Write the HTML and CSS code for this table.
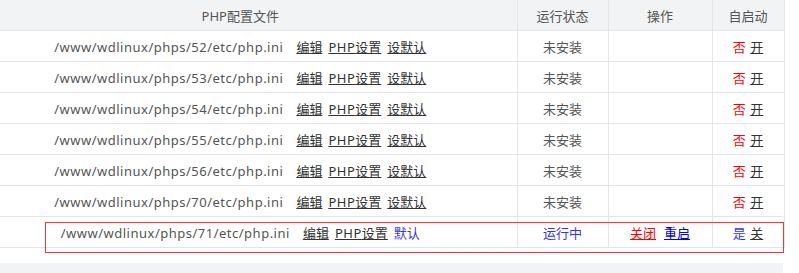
FILE: index.html
```html
<!DOCTYPE html>
<html lang="zh-CN">
<head>
<meta charset="utf-8">
<title>PHP配置</title>
<link rel="stylesheet" href="styles.css">
</head>
<body>
<div class="page">
  <table class="grid">
    <colgroup>
      <col class="c-file"><col class="c-state"><col class="c-op"><col class="c-auto">
    </colgroup>
    <thead>
      <tr><th class="file">PHP配置文件</th><th>运行状态</th><th>操作</th><th>自启动</th></tr>
    </thead>
    <tbody>
      <tr><td class="file"><span class="path">/www/wdlinux/phps/52/etc/php.ini</span><a class="lk first">编辑</a><a class="lk"><span class="lat">PHP</span>设置</a><a class="lk">设默认</a></td><td>未安装</td><td></td><td><span class="red">否</span> <a class="lk plain">开</a></td></tr>
      <tr><td class="file"><span class="path">/www/wdlinux/phps/53/etc/php.ini</span><a class="lk first">编辑</a><a class="lk"><span class="lat">PHP</span>设置</a><a class="lk">设默认</a></td><td>未安装</td><td></td><td><span class="red">否</span> <a class="lk plain">开</a></td></tr>
      <tr><td class="file"><span class="path">/www/wdlinux/phps/54/etc/php.ini</span><a class="lk first">编辑</a><a class="lk"><span class="lat">PHP</span>设置</a><a class="lk">设默认</a></td><td>未安装</td><td></td><td><span class="red">否</span> <a class="lk plain">开</a></td></tr>
      <tr><td class="file"><span class="path">/www/wdlinux/phps/55/etc/php.ini</span><a class="lk first">编辑</a><a class="lk"><span class="lat">PHP</span>设置</a><a class="lk">设默认</a></td><td>未安装</td><td></td><td><span class="red">否</span> <a class="lk plain">开</a></td></tr>
      <tr><td class="file"><span class="path">/www/wdlinux/phps/56/etc/php.ini</span><a class="lk first">编辑</a><a class="lk"><span class="lat">PHP</span>设置</a><a class="lk">设默认</a></td><td>未安装</td><td></td><td><span class="red">否</span> <a class="lk plain">开</a></td></tr>
      <tr><td class="file"><span class="path">/www/wdlinux/phps/70/etc/php.ini</span><a class="lk first">编辑</a><a class="lk"><span class="lat">PHP</span>设置</a><a class="lk">设默认</a></td><td>未安装</td><td></td><td><span class="red">否</span> <a class="lk plain">开</a></td></tr>
      <tr class="active"><td class="file"><span class="path">/www/wdlinux/phps/71/etc/php.ini</span><a class="lk first">编辑</a><a class="lk"><span class="lat">PHP</span>设置</a><span class="lk blue">默认</span></td><td class="blue">运行中</td><td><a class="lk redlink">关闭</a><a class="lk bluelink">重启</a></td><td><span class="blue">是</span> <a class="lk plain">关</a></td></tr>
    </tbody>
  </table>
  <div class="foot"></div>
  <div class="mark"></div>
</div>
</body>
</html>
```
FILE: styles.css
```css
html, body {
  margin: 0;
  padding: 0;
  background: #fff;
}
body {
  font-family: "Noto Sans", "Noto Sans CJK SC", sans-serif;
  font-size: 13px;
  color: #555;
}
.page {
  position: relative;
  width: 784px;
}
.grid {
  border-collapse: collapse;
  width: 784px;
  table-layout: fixed;
}
.c-file { width: 517px; }
.c-state { width: 91px; }
.c-op { width: 104px; }
.c-auto { width: 72px; }
.grid th {
  background: #f2f3f5;
  font-weight: normal;
  color: #555;
  height: 30px;
  padding: 0;
  text-align: center;
  border-bottom: 1px solid #e3e5e8;
  border-left: 1px solid #e3e5e8;
  border-right: 1px solid #e3e5e8;
}
.grid td {
  height: 30px;
  padding: 0;
  text-align: center;
  border-bottom: 1px solid #e3e5e8;
  border-left: 1px solid #e3e5e8;
  border-right: 1px solid #e3e5e8;
  white-space: nowrap;
}
.grid .file {
  border-left: none;
  padding-right: 36px;
}
.path {
  letter-spacing: 0.5px;
}
.lat {
  letter-spacing: 0.5px;
}
.lk {
  color: #333;
  text-decoration: underline;
  margin-left: 6px;
}
.lk.first { margin-left: 13px; }
.lk.plain { margin-left: 1px; }
.red { color: #ff0000; }
.blue { color: #3333ff; }
.lk.blue { text-decoration: none; }
.lk.redlink { color: #ff0000; margin-left: 0; margin-right: 4px; }
.lk.bluelink { color: #0000ff; margin-left: 4px; }
.foot {
  margin-top: 15px;
  height: 10px;
  width: 783px;
  background: #f2f3f5;
}
.mark {
  position: absolute;
  left: 45px;
  top: 222px;
  width: 737px;
  height: 29px;
  border: 1px solid #ff3333;
}
```
